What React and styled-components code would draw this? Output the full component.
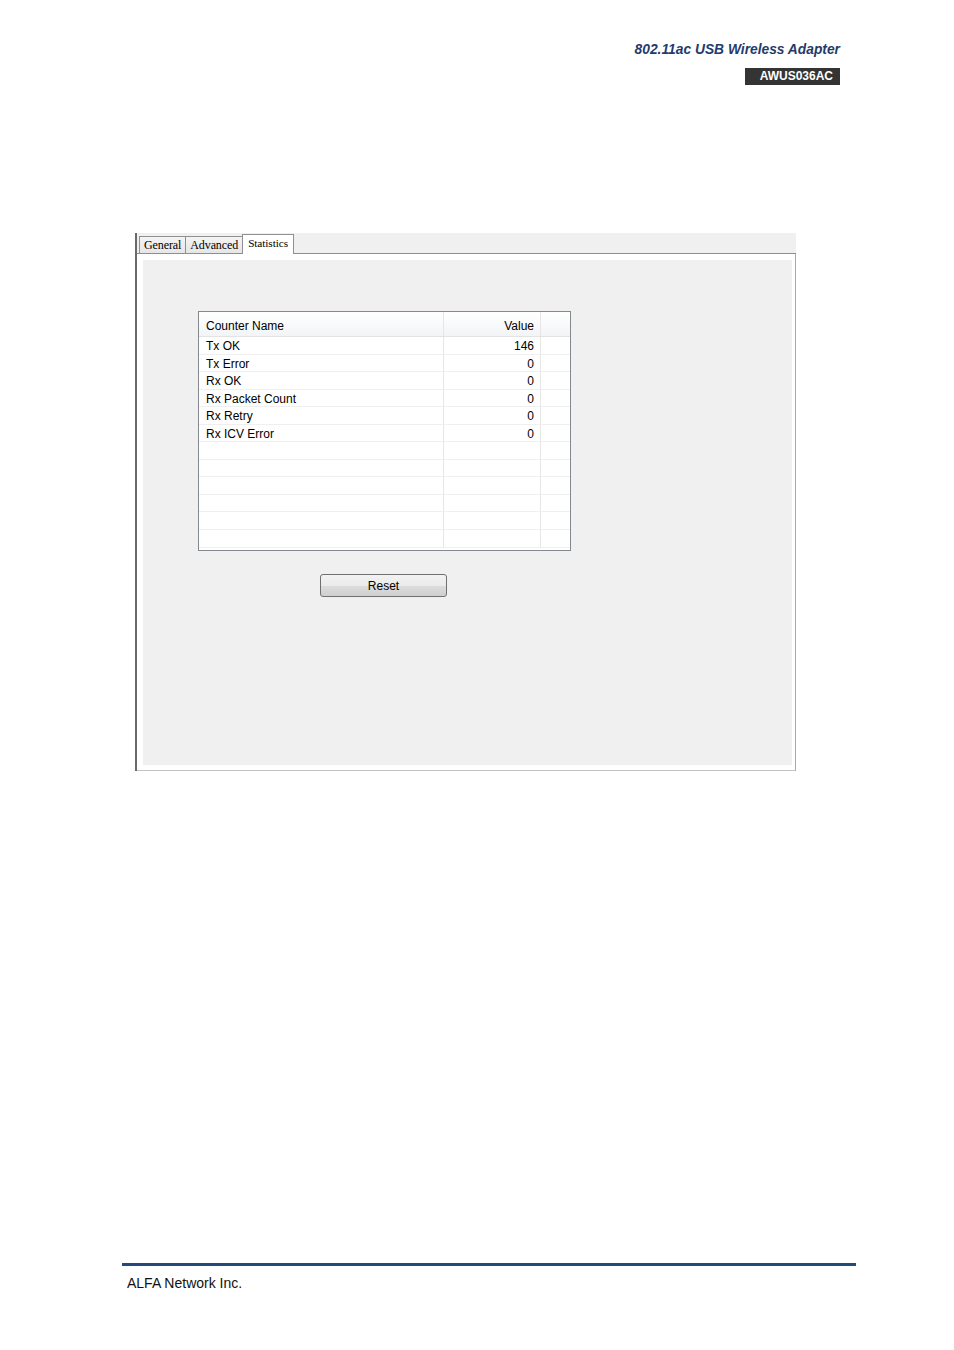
import React from 'react';
import styled, { createGlobalStyle } from 'styled-components';

const GlobalStyle = createGlobalStyle`
	html, body {
		margin: 0;
		padding: 0;
		background: #ffffff;
	}
	body {
		font-family: "Liberation Sans", Arial, sans-serif;
		color: #000;
	}
`;

const counters = [
	{ name: 'Tx OK', value: '146' },
	{ name: 'Tx Error', value: '0' },
	{ name: 'Rx OK', value: '0' },
	{ name: 'Rx Packet Count', value: '0' },
	{ name: 'Rx Retry', value: '0' },
	{ name: 'Rx ICV Error', value: '0' },
	{}, {}, {}, {}, {}, {}
];

const tabs = ['General', 'Advanced', 'Statistics'];

const Page = styled.div`
	width: 954px;
	height: 1350px;
	display: flex;
	flex-direction: column;
	box-sizing: border-box;
`;

const Header = styled.header`
	display: flex;
	flex-direction: column;
	align-items: flex-end;
	padding: 41px 114px 0 0;
	gap: 9px;
`;

const DocTitle = styled.div`
	font-size: 13.8px;
	font-weight: bold;
	font-style: italic;
	color: #1f3c6c;
	line-height: 18px;
`;

const ModelBadge = styled.div`
	background: #343434;
	color: #ffffff;
	font-size: 12px;
	font-weight: bold;
	width: 95px;
	height: 17px;
	line-height: 17px;
	text-align: right;
	padding-right: 7px;
	box-sizing: border-box;
`;

const Window = styled.div`
	margin: 148px 0 0 135px;
	width: 661px;
	height: 538px;
	display: flex;
	flex-direction: column;
	border-left: 2px solid #6a6a6a;
	box-sizing: border-box;
`;

const TabStrip = styled.div`
	height: 20px;
	background: #f0f0f0;
	display: flex;
	align-items: flex-end;
	padding-left: 3px;
	border-bottom: 1px solid #8e8e8e;
`;

const Tab = styled.div`
	font-family: "Liberation Serif", "Times New Roman", serif;
	font-size: ${p => (p.$active ? '11.3px' : '12px')};
	letter-spacing: -0.1px;
	color: #000;
	height: ${p => (p.$active ? '20px' : '17px')};
	line-height: 17px;
	padding: 0 ${p => (p.$active ? '5px' : '4px')};
	background: ${p => (p.$active ? '#ffffff' : 'linear-gradient(#f4f4f4, #e6e6e6)')};
	border: 1px solid #909090;
	border-bottom: none;
	margin-bottom: ${p => (p.$active ? '-1px' : '0')};
	margin-left: -1px;
	position: relative;
	box-sizing: border-box;
`;

const Body = styled.div`
	flex: 1;
	background: #ffffff;
	border-right: 1px solid #a9a9a9;
	border-bottom: 1px solid #c3c3c3;
	padding: 6px 3px 5px 6px;
	display: flex;
`;

const Content = styled.div`
	flex: 1;
	background: #f0f0f0;
	padding: 51px 0 0 55px;
	display: flex;
	flex-direction: column;
	align-items: flex-start;
`;

const Grid = styled.div`
	width: 373px;
	height: 240px;
	border: 1px solid #84888f;
	background: #ffffff;
	box-sizing: border-box;
	overflow: hidden;
	font-family: "Liberation Sans", Tahoma, sans-serif;
	font-size: 12px;
`;

const Row = styled.div`
	display: grid;
	grid-template-columns: 245px 97px 1fr;
	height: ${p => (p.$head ? '25px' : '17.55px')};
	align-items: center;
	background: ${p => (p.$head ? 'linear-gradient(#ffffff, #f3f4f6)' : '#ffffff')};
	border-bottom: 1px solid ${p => (p.$head ? '#e3e3e3' : '#efefef')};
	box-sizing: border-box;
`;

const Cell = styled.div`
	height: 100%;
	display: flex;
	align-items: center;
	justify-content: ${p => (p.$right ? 'flex-end' : 'flex-start')};
	padding: ${p => (p.$right ? '0 6px 0 0' : '0 0 0 7px')};
	padding-top: ${p => (p.$head ? '3px' : '2px')};
	border-right: ${p => (p.$last ? 'none' : '1px solid #e6e6e6')};
	box-sizing: border-box;
	white-space: nowrap;
`;

const ResetButton = styled.button`
	margin: 23px 0 0 122px;
	width: 127px;
	height: 23px;
	font-family: "Liberation Sans", Tahoma, sans-serif;
	font-size: 12px;
	color: #000;
	border: 1px solid #707070;
	border-radius: 3px;
	background: linear-gradient(#f2f2f2 0%, #ebebeb 50%, #dddddd 51%, #cfcfcf 100%);
	padding: 0;
	padding-top: 1px;
`;

const Footer = styled.footer`
	margin-top: auto;
	padding: 0 98px 57px 122px;
`;

const Rule = styled.div`
	height: 3px;
	background: #25497a;
`;

const Company = styled.div`
	font-size: 14px;
	line-height: 20px;
	margin: 7px 0 0 5px;
	color: #111;
`;

const App = () => (
	<>
		<GlobalStyle />
		<Page>
			<Header>
				<DocTitle>802.11ac USB Wireless Adapter</DocTitle>
				<ModelBadge>AWUS036AC</ModelBadge>
			</Header>

			<Window>
				<TabStrip>
					{tabs.map(t => (
						<Tab key={t} $active={t === 'Statistics'}>{t}</Tab>
					))}
				</TabStrip>
				<Body>
					<Content>
						<Grid>
							<Row $head>
								<Cell $head>Counter Name</Cell>
								<Cell $head $right>Value</Cell>
								<Cell $head $last />
							</Row>
							{counters.map((c, i) => (
								<Row key={i}>
									<Cell>{c.name}</Cell>
									<Cell $right>{c.value}</Cell>
									<Cell $last />
								</Row>
							))}
						</Grid>
						<ResetButton>Reset</ResetButton>
					</Content>
				</Body>
			</Window>

			<Footer>
				<Rule />
				<Company>ALFA Network Inc.</Company>
			</Footer>
		</Page>
	</>
);

export default App;
